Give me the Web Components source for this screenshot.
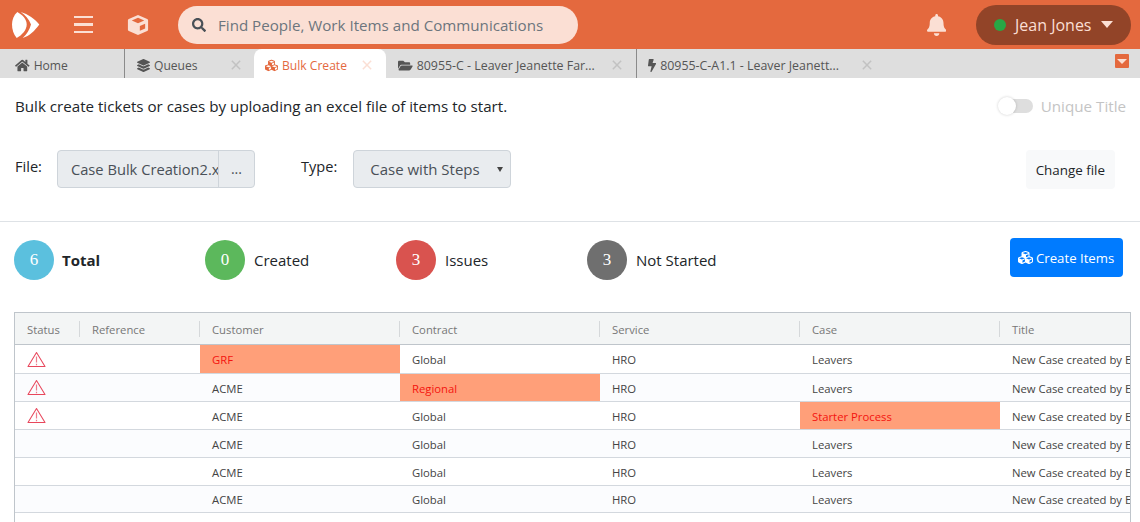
<!DOCTYPE html>
<html>
<head>
<meta charset="utf-8">
<title>Bulk Create</title>
<style>
  html, body { margin: 0; height: 100%; overflow: hidden; background: #fff; }
  body { font-family: "Open Sans", "Noto Sans", sans-serif; color: #212529; }
</style>
</head>
<body>
<bulk-app></bulk-app>
<script>
const ICONS = {
  search: ['0 0 512 512', 'M505 442.7L405.3 343c-4.5-4.5-10.6-7-17-7H372c27.6-35.3 44-79.7 44-128C416 93.1 322.9 0 208 0S0 93.1 0 208s93.1 208 208 208c48.3 0 92.7-16.4 128-44v16.3c0 6.4 2.5 12.5 7 17l99.7 99.7c9.4 9.4 24.6 9.4 33.9 0l28.3-28.3c9.4-9.4 9.4-24.6.1-34zM208 336c-70.7 0-128-57.2-128-128 0-70.7 57.2-128 128-128 70.7 0 128 57.2 128 128 0 70.7-57.2 128-128 128z'],
  bell: ['0 0 448 512', 'M224 512c35.32 0 63.97-28.65 63.97-64H160.03c0 35.35 28.65 64 63.97 64zm215.39-149.71c-19.32-20.76-55.47-51.99-55.47-154.29 0-77.7-54.48-139.9-127.94-155.16V32c0-17.67-14.32-32-31.98-32s-31.98 14.33-31.98 32v20.84C118.56 68.1 64.08 130.3 64.08 208c0 102.3-36.15 133.53-55.47 154.29-6 6.45-8.66 14.16-8.61 21.71.11 16.4 12.98 32 32.1 32h383.8c19.12 0 32-15.6 32.1-32 .05-7.55-2.61-15.27-8.61-21.71z'],
  bolt: ['0 0 320 512', 'M296 160H180.6l42.6-129.8C227.2 15 215.7 0 200 0H56C44 0 33.8 8.9 32.2 20.8l-32 240C-1.7 275.2 9.5 288 24 288h118.7L96.6 482.5c-3.6 15.2 8 29.5 23.3 29.5 8.4 0 16.4-4.4 20.8-12l176-304c9.3-15.9-2.2-36-20.7-36z'],
  home: ['0 0 576 512', 'M280.37 148.26L96 300.11V464a16 16 0 0 0 16 16l112.06-.29a16 16 0 0 0 15.92-16V368a16 16 0 0 1 16-16h64a16 16 0 0 1 16 16v95.64a16 16 0 0 0 16 16.05L464 480a16 16 0 0 0 16-16V300L295.67 148.26a12.19 12.19 0 0 0-15.3 0zM571.6 251.47L488 182.56V44.05a12 12 0 0 0-12-12h-56a12 12 0 0 0-12 12v72.61L318.47 43a48 48 0 0 0-61 0L4.34 251.47a12 12 0 0 0-1.6 16.9l25.5 31A12 12 0 0 0 45.15 301l235.22-193.74a12.19 12.19 0 0 1 15.3 0L530.9 301a12 12 0 0 0 16.9-1.6l25.5-31a12 12 0 0 0-1.7-16.93z'],
  layers: ['0 0 512 512', 'M12.41 148.02l232.94 105.67c6.8 3.09 14.49 3.09 21.29 0l232.94-105.67c16.55-7.51 16.55-32.52 0-40.03L266.65 2.31a25.607 25.607 0 0 0-21.29 0L12.41 107.98c-16.55 7.51-16.55 32.53 0 40.04zm487.18 88.28l-58.09-26.33-161.64 73.27c-7.56 3.43-15.59 5.17-23.86 5.17s-16.29-1.74-23.86-5.17L70.51 209.97l-58.1 26.33c-16.55 7.5-16.55 32.5 0 40l232.94 105.59c6.8 3.08 14.49 3.08 21.29 0L499.59 276.3c16.55-7.5 16.55-32.5 0-40zm0 127.8l-57.87-26.23-161.86 73.37c-7.56 3.43-15.59 5.17-23.86 5.17s-16.29-1.74-23.86-5.17L70.29 337.87 12.41 364.1c-16.55 7.5-16.55 32.5 0 40l232.94 105.59c6.8 3.08 14.49 3.08 21.29 0L499.59 404.1c16.55-7.5 16.55-32.5 0-40z'],
  folder: ['0 0 576 512', 'M572.694 292.093L500.27 416.248A63.997 63.997 0 0 1 444.989 448H45.025c-18.523 0-30.064-20.093-20.731-36.093l72.424-124.155A64 64 0 0 1 152 256h399.964c18.523 0 30.064 20.093 20.73 36.093zM152 224h328v-48c0-26.51-21.49-48-48-48H272l-64-64H48C21.49 64 0 85.49 0 112v278.046l69.077-118.418C86.214 242.25 117.989 224 152 224z'],
  cubes: ['0 0 512 512', 'M488.6 250.2L392 214V105.5c0-15-9.3-28.4-23.4-33.7l-100-37.5c-8.1-3.1-17.1-3.1-25.3 0l-100 37.5c-14.1 5.3-23.4 18.7-23.4 33.7V214l-96.6 36.2C9.3 255.5 0 268.9 0 283.9V394c0 13.6 7.7 26.1 19.9 32.2l100 50c10.1 5.1 22.1 5.1 32.2 0l103.9-52 103.9 52c10.1 5.1 22.1 5.1 32.2 0l100-50c12.2-6.1 19.9-18.6 19.9-32.2V283.9c0-15-9.3-28.4-23.4-33.7zM358 214.8l-85 31.9v-68.2l85-37v73.3zM154 104.1l102-38.2 102 38.2v.6l-102 41.4-102-41.4v-.6zm84 291.1l-85 42.5v-79.1l85-38.8v75.4zm0-112l-102 41.4-102-41.4v-.6l102-38.2 102 38.2v.6zm240 112l-85 42.5v-79.1l85-38.8v75.4zm0-112l-102 41.4-102-41.4v-.6l102-38.2 102 38.2v.6z'],
  box: ['0 0 24 24', 'M12 1 2 5.400a1.600 1.600 0 0 0-1 1.500v10.200a1.600 1.600 0 0 0 1 1.500l10 4.400 10-4.400a1.600 1.600 0 0 0 1-1.500V6.900a1.600 1.600 0 0 0-1-1.500ZM12 4l6.800 3L12 10 5.200 7ZM14 13.200l5.800-2.500v5L14 18.200Z'],
  cross: ['0 0 12 12', 'M1 1 11 11M11 1 1 11']
};

class FaIcon extends HTMLElement {
  constructor() {
    super();
    const [box, d] = ICONS[this.getAttribute('name')];
    const stroked = this.getAttribute('name') === 'cross';
    this.attachShadow({ mode: 'open' }).innerHTML = `
      <style>
        :host { display: inline-flex; align-items: center; }
        svg { height: var(--size, 14px); display: block; }
      </style>
      <svg viewBox="${box}"><path d="${d}" ${stroked ? 'fill="none" stroke="currentColor" stroke-width="1.800"' : 'fill="currentColor" fill-rule="evenodd"'}/></svg>`;
  }
}
customElements.define('fa-icon', FaIcon);

const topBarTemplate = document.createElement('template');
topBarTemplate.innerHTML = `
  <style>
    :host { display: flex; align-items: center; height: 49px; background: #e4693e; color: #fbdfd4; flex: none; }
    .logo { width: 28px; height: 28px; margin-left: 12px; flex: none; }
    .menu { display: flex; flex-direction: column; gap: 5px; width: 19px; margin-left: 34px; flex: none; }
    .menu i { height: 2.500px; background: #fbdfd4; }
    .box { --size: 22px; margin-left: 34px; }
    .search { display: flex; align-items: center; width: 400px; height: 38px; margin-left: 29px; border-radius: 19px; background: #fbdfd4; box-sizing: border-box; padding-left: 14px; color: #495057; }
    .search fa-icon { --size: 14px; }
    .search span { margin-left: 12px; font-size: 15.150px; color: #6c757d; }
    .bell { --size: 22px; margin-left: auto; margin-right: 30px; }
    .user { display: flex; align-items: center; width: 155px; height: 40px; box-sizing: border-box; margin-right: 9px; padding-left: 18px; border-radius: 20px; background: #924428; font-size: 16px; }
    .dot { width: 12px; height: 12px; border-radius: 50%; background: #28a745; margin-right: 9px; }
    .caret { margin-left: 10px; border: 6px solid transparent; border-top: 7px solid #fbdfd4; border-bottom: 0; }
  </style>
  <svg class="logo" viewBox="0 0 28 28">
    <path fill="#fff" d="M5.300 1C1.500 4.500 0 9 0 13.500S1.500 23.500 4.700 27C10 24 14.700 19 14.700 13.500S10.500 4 5.300 1Z"/>
    <path fill="#fff" d="M8.700 1C16 3 23 8 27.300 13.500 23 19.500 17.500 25 10.700 27 15 23.500 17.500 18.500 19 13.500 17 8.500 13.500 4 8.700 1Z"/>
  </svg>
  <div class="menu"><i></i><i></i><i></i></div>
  <fa-icon class="box" name="box"></fa-icon>
  <div class="search"><fa-icon name="search"></fa-icon><span>Find People, Work Items and Communications</span></div>
  <fa-icon class="bell" name="bell"></fa-icon>
  <div class="user"><span class="dot"></span><span>Jean Jones</span><span class="caret"></span></div>`;
class TopBar extends HTMLElement {
  constructor() {
    super();
    this.attachShadow({ mode: 'open' }).appendChild(topBarTemplate.content.cloneNode(true));
  }
}
customElements.define('top-bar', TopBar);

class TabItem extends HTMLElement {
  constructor() {
    super();
    const closable = this.hasAttribute('closable');
    this.attachShadow({ mode: 'open' }).innerHTML = `
      <style>
        :host { display: flex; align-items: center; box-sizing: border-box; height: 29px; padding-top: 3px; padding-left: 15px; font-size: 12.100px; color: #555; border-right: 1px solid #8a8a8a; flex: none; position: relative; }
        :host([active]) { background: #fff; color: #e4693e; border-right: 0; border-radius: 8px 8px 0 0; padding-left: 11px; }
        :host([borderless]) { border-right: 0; }
        fa-icon { --size: 13px; margin-right: 4px; }
        .x { margin-left: auto; margin-right: 14px; --size: 10px; color: #c2c2c2; }
        :host([active]) .x { color: #fbdfd4; }
      </style>
      <fa-icon name="${this.getAttribute('icon')}"></fa-icon><span><slot></slot></span>
      ${closable ? '<fa-icon class="x" name="cross"></fa-icon>' : ''}`;
  }
}
customElements.define('tab-item', TabItem);

const tabBarTemplate = document.createElement('template');
tabBarTemplate.innerHTML = `
  <style>
    :host { display: flex; height: 29px; background: #dedede; flex: none; position: relative; }
    .more { position: absolute; right: 11px; top: 5px; width: 14px; height: 14px; border-radius: 1px; background: #e4693e; display: flex; align-items: center; justify-content: center; }
    .more::before { content: ''; border: 5px solid transparent; border-top-color: #fbdfd4; border-bottom: 0; }
  </style>
  <slot></slot><div class="more"></div>`;
class TabBar extends HTMLElement {
  constructor() {
    super();
    this.attachShadow({ mode: 'open' }).appendChild(tabBarTemplate.content.cloneNode(true));
  }
}
customElements.define('tab-bar', TabBar);

const fileFormTemplate = document.createElement('template');
fileFormTemplate.innerHTML = `
  <style>
    :host { display: block; height: 144px; box-sizing: border-box; border-bottom: 1px solid #dee2e6; padding: 0 14px 0 15px; font-size: 15.150px; flex: none; }
    .intro { display: flex; align-items: center; justify-content: space-between; height: 56px; }
    .toggle { display: flex; align-items: center; color: #c4c4c4; font-size: 15.200px; }
    .track { position: relative; width: 33px; height: 14px; border-radius: 7px; background: #dedede; margin-right: 8px; }
    .knob { position: absolute; left: -2px; top: -2px; width: 18px; height: 18px; border-radius: 50%; background: #fff; box-shadow: 0 0 3px rgba(0,0,0,.2); }
    .row { display: flex; align-items: center; margin-top: 16px; height: 38px; }
    .label { position: relative; top: -3px; font-size: 14.600px; }
    .file { display: flex; width: 198px; height: 38px; box-sizing: border-box; margin-left: 15px; border: 1px solid #ced4da; border-radius: 4px; background: #e9ecef; color: #495057; font-size: 14.700px; line-height: 36px; }
    .file .name { width: 161px; padding-left: 13px; box-sizing: border-box; overflow: hidden; white-space: nowrap; border-right: 1px solid #ced4da; }
    .file .dots { flex: 1; text-align: center; font-size: 14px; }
    .select { display: flex; align-items: center; width: 158px; height: 38px; box-sizing: border-box; margin-left: 16px; padding-left: 16px; border: 1px solid #ced4da; border-radius: 4px; background: #e9ecef; color: #495057; font-size: 15px; }
    .select::after { content: ''; margin-left: auto; margin-right: 7px; border: 3.500px solid transparent; border-top: 5px solid #444; border-bottom: 0; }
    .change { margin-left: auto; margin-right: 11px; padding: 0 10px; height: 39px; line-height: 40px; border-radius: 4px; background: #f8f9fa; font-size: 13.400px; }
  </style>
  <div class="intro">
    <span>Bulk create tickets or cases by uploading an excel file of items to start.</span>
    <span class="toggle"><span class="track"><span class="knob"></span></span>Unique Title</span>
  </div>
  <div class="row">
    <span class="label">File:</span>
    <div class="file"><span class="name">Case Bulk Creation2.xlsx</span><span class="dots">...</span></div>
    <span class="label" style="margin-left:46px">Type:</span>
    <div class="select">Case with Steps</div>
    <div class="change">Change file</div>
  </div>`;
class FileForm extends HTMLElement {
  constructor() {
    super();
    this.attachShadow({ mode: 'open' }).appendChild(fileFormTemplate.content.cloneNode(true));
  }
}
customElements.define('file-form', FileForm);

class StatBadge extends HTMLElement {
  constructor() {
    super();
    this.attachShadow({ mode: 'open' }).innerHTML = `
      <style>
        :host { display: flex; align-items: center; width: 191px; font-size: 15px; }
        .n { width: 40px; height: 40px; border-radius: 50%; background: var(--c); color: #fff; display: flex; align-items: center; justify-content: center; margin-right: 9px; font-family: "Liberation Serif", serif; font-size: 17px; font-weight: 400; }
        :host([strong]) { font-weight: 700; }
        :host([strong]) .n { margin-right: 8px; }
      </style>
      <span class="n">${this.getAttribute('count')}</span><span><slot></slot></span>`;
  }
}
customElements.define('stat-badge', StatBadge);

const statsTemplate = document.createElement('template');
statsTemplate.innerHTML = `
  <style>
    :host { display: flex; align-items: center; padding: 16px 17px 0 14px; flex: none; }
    .create { display: flex; align-items: center; gap: 3px; margin-left: auto; margin-bottom: 5px; height: 39px; padding: 0 8px; width: 113px; box-sizing: border-box; border-radius: 4px; background: #007bff; color: #fff; font-size: 13.200px; white-space: nowrap; }
    fa-icon { --size: 15px; }
  </style>
  <slot></slot>
  <div class="create"><fa-icon name="cubes"></fa-icon>Create Items</div>`;
class StatsRow extends HTMLElement {
  constructor() {
    super();
    this.attachShadow({ mode: 'open' }).appendChild(statsTemplate.content.cloneNode(true));
  }
}
customElements.define('stats-row', StatsRow);

const COLUMNS = '65px 120px 200px 200px 200px 200px 200px';

class GridRow extends HTMLElement {
  constructor() {
    super();
    const bad = Number(this.getAttribute('bad') || -1);
    const warn = this.hasAttribute('warn');
    const cells = (this.getAttribute('cells') || '').split('|');
    const alt = this.hasAttribute('alt') ? 'background:#fbfcfe;' : '';
    this.attachShadow({ mode: 'open' }).innerHTML = `
      <style>
        :host { display: grid; grid-template-columns: ${COLUMNS}; box-sizing: border-box; height: 28px; border-bottom: 1px solid #d3d8de; width: 1185px; font-size: 11.300px; color: #444; }
        .c { display: flex; align-items: center; padding: 1px 0 0 12px; white-space: nowrap; overflow: hidden; }
        .bad { background: #ff9f79; color: #f4140f; }
        svg { width: 19px; height: 17px; margin-top: -1px; }
      </style>
      <div class="c" style="${alt}">${warn ? '<svg viewBox="0 0 19 17"><path d="M9.500 1.500 1 15.500h17Z" fill="none" stroke="#e8475c" stroke-width="1.050" stroke-linejoin="round"/><path d="M9.500 5.500v6M9.500 12.800v1.400" stroke="#e8475c" stroke-width="1.200" opacity=".7"/></svg>' : ''}</div>
      <div class="c" style="${alt}"></div>
      ${cells.map((t, i) => `<div class="c ${i === bad ? 'bad' : ''}" style="${i === bad ? '' : alt}">${t}</div>`).join('')}`;
  }
}
customElements.define('grid-row', GridRow);

const gridTemplate = document.createElement('template');
gridTemplate.innerHTML = `
  <style>
    :host { display: block; flex: 1; margin: 30px 9px 0 14px; border-left: 1px solid #bfc5cb; border-right: 1px solid #bfc5cb; border-top: 1px solid #bfc5cb; overflow: hidden; }
    .head { display: grid; grid-template-columns: ${COLUMNS}; width: 1185px; height: 32px; box-sizing: border-box; background: #f3f5f5; border-bottom: 1px solid #bfc5cb; font-size: 11.300px; color: #777; }
    .head div { display: flex; align-items: center; padding: 1px 0 0 12px; position: relative; }
    .head div + div::before { content: ''; position: absolute; left: -1px; top: 8px; height: 16px; width: 1px; background: #d5d8da; }
  </style>
  <div class="head">
    <div>Status</div><div>Reference</div><div>Customer</div><div>Contract</div><div>Service</div><div>Case</div><div>Title</div>
  </div>
  <slot></slot>`;
class DataGrid extends HTMLElement {
  constructor() {
    super();
    this.attachShadow({ mode: 'open' }).appendChild(gridTemplate.content.cloneNode(true));
  }
}
customElements.define('data-grid', DataGrid);

const appTemplate = document.createElement('template');
appTemplate.innerHTML = `
  <style>
    :host { display: flex; flex-direction: column; height: 522px; overflow: hidden; }
  </style>
  <top-bar></top-bar>
  <tab-bar>
    <tab-item icon="home" style="width:125px">Home</tab-item>
    <tab-item icon="layers" closable borderless style="width:130px;padding-left:12px;margin-right:-1px">Queues</tab-item>
    <tab-item icon="cubes" closable active style="width:132px">Bulk Create</tab-item>
    <tab-item icon="folder" closable style="width:251px;padding-left:12px;font-size:12.400px">80955-C - Leaver Jeanette Far...</tab-item>
    <tab-item icon="bolt" closable borderless style="width:249px;padding-left:11px;font-size:12.400px">80955-C-A1.1 - Leaver Jeanett...</tab-item>
  </tab-bar>
  <file-form></file-form>
  <stats-row>
    <stat-badge count="6" strong style="--c:#5bc0de">Total</stat-badge>
    <stat-badge count="0" style="--c:#5cb85c">Created</stat-badge>
    <stat-badge count="3" style="--c:#d9534f">Issues</stat-badge>
    <stat-badge count="3" style="--c:#6f6f6f">Not Started</stat-badge>
  </stats-row>
  <data-grid>
    <grid-row warn bad="0" style="height:29px" cells="GRF|Global|HRO|Leavers|New Case created by Excel"></grid-row>
    <grid-row warn alt bad="1" cells="ACME|Regional|HRO|Leavers|New Case created by Excel"></grid-row>
    <grid-row warn bad="3" cells="ACME|Global|HRO|Starter Process|New Case created by Excel"></grid-row>
    <grid-row alt cells="ACME|Global|HRO|Leavers|New Case created by Excel"></grid-row>
    <grid-row cells="ACME|Global|HRO|Leavers|New Case created by Excel"></grid-row>
    <grid-row alt style="height:27px" cells="ACME|Global|HRO|Leavers|New Case created by Excel"></grid-row>
  </data-grid>`;
class BulkApp extends HTMLElement {
  constructor() {
    super();
    this.attachShadow({ mode: 'open' }).appendChild(appTemplate.content.cloneNode(true));
  }
}
customElements.define('bulk-app', BulkApp);
</script>
</body>
</html>
